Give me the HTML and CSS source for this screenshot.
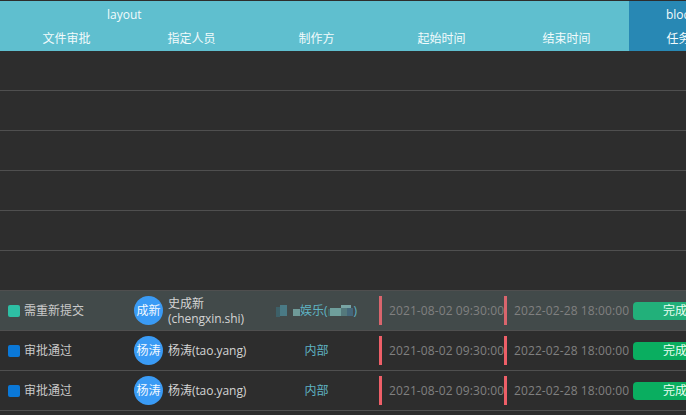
FILE: index.html
```html
<!DOCTYPE html>
<html lang="zh">
<head>
<meta charset="utf-8">
<title>任务列表</title>
<link rel="stylesheet" href="styles.css">
</head>
<body>
<div class="sheet">
  <header class="head">
    <div class="group group-layout">
      <div class="group-title">layout</div>
      <div class="cols cols-five">
        <div>文件审批</div><div>指定人员</div><div>制作方</div><div>起始时间</div><div>结束时间</div>
      </div>
    </div>
    <div class="group group-block">
      <div class="group-title">block</div>
      <div class="cols cols-one"><div>任务状态</div></div>
    </div>
  </header>
  <main class="rows">
    <div class="row"></div>
    <div class="row"></div>
    <div class="row"></div>
    <div class="row"></div>
    <div class="row"></div>
    <div class="row"></div>
    <div class="row row-active">
      <div class="cell status"><i class="sq sq-teal"></i>需重新提交</div>
      <div class="cell person"><span class="avatar">成新</span><span class="name name-wrap">史成新<br>(chengxin.shi)</span></div>
      <div class="cell maker">
        <svg class="mosaic" width="24" height="12" viewBox="0 0 24 12" aria-hidden="true">
          <rect x="0" y="2" width="4" height="10" fill="#3d6068"/><rect x="4" y="0" width="7" height="11" fill="#4a7a85"/>
          <rect x="17" y="4" width="7" height="7" fill="#6f9a98"/>
        </svg><span>娱乐(</span><svg class="mosaic" width="26" height="12" viewBox="0 0 26 12" aria-hidden="true">
          <rect x="0" y="4" width="2" height="7" fill="#3f6668"/><rect x="2" y="3" width="11" height="8" fill="#6f9f9c"/>
          <rect x="13" y="0" width="10" height="3" fill="#78a4a4"/><rect x="13" y="3" width="6" height="8" fill="#54797c"/>
          <rect x="19" y="3" width="6" height="8" fill="#45677a"/>
        </svg><span>)</span>
      </div>
      <div class="cell date"><i class="bar"></i>2021-08-02 09:30:00</div>
      <div class="cell date"><i class="bar"></i>2022-02-28 18:00:00</div>
      <div class="cell state"><span class="pill">完成</span></div>
    </div>
    <div class="row">
      <div class="cell status"><i class="sq sq-blue"></i>审批通过</div>
      <div class="cell person"><span class="avatar">杨涛</span><span class="name">杨涛(tao.yang)</span></div>
      <div class="cell maker">内部</div>
      <div class="cell date"><i class="bar"></i>2021-08-02 09:30:00</div>
      <div class="cell date"><i class="bar"></i>2022-02-28 18:00:00</div>
      <div class="cell state"><span class="pill">完成</span></div>
    </div>
    <div class="row">
      <div class="cell status"><i class="sq sq-blue"></i>审批通过</div>
      <div class="cell person"><span class="avatar">杨涛</span><span class="name">杨涛(tao.yang)</span></div>
      <div class="cell maker">内部</div>
      <div class="cell date"><i class="bar"></i>2021-08-02 09:30:00</div>
      <div class="cell date"><i class="bar"></i>2022-02-28 18:00:00</div>
      <div class="cell state"><span class="pill">完成</span></div>
    </div>
  </main>
</div>
</body>
</html>
```
FILE: styles.css
```css
* { box-sizing: border-box; }
html, body { margin: 0; height: 100%; overflow: hidden; background: #2d2d2d; }
body { font: 12px/16px "Open Sans", "Noto Sans CJK SC", sans-serif; color: #ddd; }
.sheet { width: 754px; height: 415px; overflow: hidden; padding-top: 1px; }
.head { display: flex; height: 50px; color: #f2fbfc; }
.group { flex: none; display: flex; flex-direction: column; }
.group-layout { width: 629px; background: #5fbfcf; padding-left: 4px; }
.group-block { width: 125px; background: #2888b4; }
.group-title { height: 25px; padding-top: 6px; }
.group-layout .group-title { padding-left: 103px; }
.group-block .group-title { padding-left: 37px; }
.cols { display: grid; grid-auto-flow: column; grid-auto-columns: 125px; text-align: center; padding-top: 5px; }
.cols-one { margin-left: -1px; }
.rows { display: flex; flex-direction: column; }
.row { height: 40px; flex: none; border-bottom: 1px solid #4f4f4f; display: grid; grid-template-columns: 4px repeat(6, 125px); grid-auto-rows: 39px; align-items: center; }
.row-active { background: #424a4a; }
.row > .status { grid-column: 2; }
.cell { display: flex; align-items: center; height: 39px; white-space: nowrap; }
.status { padding-left: 4px; color: #c9c9c9; }
.sq { width: 12px; height: 12px; border-radius: 2px; margin-right: 4px; }
.sq-teal { background: #2dbfa4; }
.sq-blue { background: #0a78d8; }
.person { padding-left: 5px; }
.avatar { width: 29px; height: 29px; border-radius: 50%; background: #3a9bf5; color: #f4f9ff; text-align: center; line-height: 29px; flex: none; margin-right: 5px; }
.name { color: #d4d4d4; letter-spacing: -0.05px; }
.name-wrap { line-height: 15px; padding-top: 1px; }
.maker { justify-content: center; color: #5fb4c4; }
.mosaic { flex: none; }
.date { color: #808080; position: relative; padding-left: 10px; letter-spacing: 0.1px; }
.bar { position: absolute; left: 0; top: 5px; width: 3px; height: 29px; background: #ee5f68; }
.row-active .bar { background: #d9656d; }
.state { padding-left: 4px; }
.pill { display: block; width: 84px; height: 18px; line-height: 18px; border-radius: 4px; background: #0aae60; color: #eafff3; text-align: center; }
.row-active .pill { background: #22b07a; }
```
